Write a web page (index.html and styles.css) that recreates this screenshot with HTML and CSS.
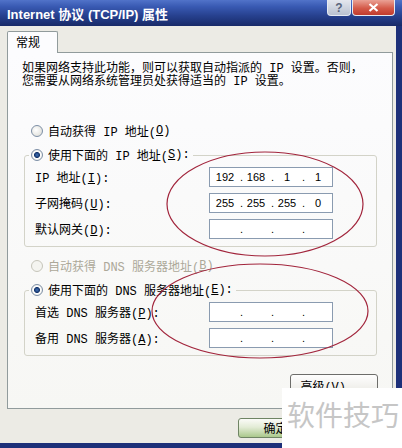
FILE: index.html
```html
<!DOCTYPE html>
<html lang="zh-CN">
<head>
  <meta charset="UTF-8" />
  <title>Internet 协议 (TCP/IP) 属性</title>
  <link rel="stylesheet" href="styles.css">
</head>
<body>
  <div class="window">
    <div class="titlebar">
      <span class="title">Internet 协议 (TCP/IP) 属性</span>
      <div class="caption-btns">
        <span class="cap-btn help">?</span>
        <span class="cap-btn close">
          <svg width="11" height="9" viewBox="0 0 11 9"><path d="M1.5 1 L9.5 8 M9.5 1 L1.5 8" stroke="#fff" stroke-width="2.2" fill="none"/></svg>
        </span>
      </div>
    </div>

    <div class="client">
      <div class="tabs"><span class="tab">常规</span></div>
      <div class="panel">
        <p class="intro">如果网络支持此功能，则可以获取自动指派的 IP 设置。否则，<br>您需要从网络系统管理员处获得适当的 IP 设置。</p>

        <div class="radio-row first"><span class="radio"></span>自动获得 IP 地址(<u>O</u>)</div>
        <fieldset class="group">
          <legend class="radio-row"><span class="radio checked"></span>使用下面的 IP 地址(<u>S</u>):</legend>
          <div class="field-row">
            <span>IP 地址(<u>I</u>):</span>
            <div class="ip"><span class="oct">192</span><span class="dot">.</span><span class="oct">168</span><span class="dot">.</span><span class="oct">1</span><span class="dot">.</span><span class="oct">1</span></div>
          </div>
          <div class="field-row">
            <span>子网掩码(<u>U</u>):</span>
            <div class="ip"><span class="oct">255</span><span class="dot">.</span><span class="oct">255</span><span class="dot">.</span><span class="oct">255</span><span class="dot">.</span><span class="oct">0</span></div>
          </div>
          <div class="field-row">
            <span>默认网关(<u>D</u>):</span>
            <div class="ip"><span class="oct"></span><span class="dot">.</span><span class="oct"></span><span class="dot">.</span><span class="oct"></span><span class="dot">.</span><span class="oct"></span></div>
          </div>
        </fieldset>

        <div class="radio-row disabled"><span class="radio"></span>自动获得 DNS 服务器地址(<u>B</u>)</div>
        <fieldset class="group">
          <legend class="radio-row"><span class="radio checked"></span>使用下面的 DNS 服务器地址(<u>E</u>):</legend>
          <div class="field-row">
            <span>首选 DNS 服务器(<u>P</u>):</span>
            <div class="ip"><span class="oct"></span><span class="dot">.</span><span class="oct"></span><span class="dot">.</span><span class="oct"></span><span class="dot">.</span><span class="oct"></span></div>
          </div>
          <div class="field-row">
            <span>备用 DNS 服务器(<u>A</u>):</span>
            <div class="ip"><span class="oct"></span><span class="dot">.</span><span class="oct"></span><span class="dot">.</span><span class="oct"></span><span class="dot">.</span><span class="oct"></span></div>
          </div>
        </fieldset>

        <div class="panel-actions"><button class="btn advanced">高级(<u>V</u>)...</button></div>
      </div>
      <div class="dialog-actions"><button class="btn default">确定</button></div>
    </div>

    <!-- red marks drawn over the screenshot -->
    <svg class="marks" width="402" height="448" viewBox="0 0 402 448">
      <ellipse cx="265" cy="204" rx="98" ry="52" />
      <ellipse cx="260" cy="311" rx="108" ry="47" />
    </svg>
    <div class="watermark">软件技巧</div>
  </div>
</body>
</html>
```

FILE: styles.css
```css
body {
  margin: 0;
  font: 12px "Liberation Mono", "Noto Sans CJK SC", monospace;
  color: #000;
  background: #ecebe5;
}
.window {
  width: 402px;
  height: 448px;
  position: relative;
  overflow: hidden;
  display: flex;
  flex-direction: column;
}
.titlebar {
  height: 26px;
  flex: none;
  display: flex;
  background: linear-gradient(#5173c9 0%, #395ab3 25%, #27418f 60%, #182a68 100%);
}
.title {
  padding: 7px 0 0 7px;
  color: #fff;
  font: bold 13px/15px "Liberation Sans", "Noto Sans CJK SC", sans-serif;
}
.caption-btns {
  margin-left: auto;
  margin-right: 7px;
  display: flex;
  gap: 1px;
}
.cap-btn {
  height: 16px;
  box-sizing: border-box;
  border: 1px solid #e6eaf2;
  border-top: none;
  border-radius: 0 0 4px 4px;
  display: flex;
  align-items: center;
  justify-content: center;
}
.help {
  width: 24px;
  background: linear-gradient(#e4e7ee, #b9c1d0);
  color: #59647c;
  font: bold 12px "Liberation Sans", sans-serif;
}
.close {
  width: 43px;
  background: linear-gradient(#eaa195, #d45a49 55%, #c13b2d);
}
.client {
  flex: 1;
  border-right: 6px solid #1d3079;
  border-bottom: 5px solid #1d3079;
  padding: 5px 3px 0 7px;
}
.tabs {
  height: 21px;
  display: flex;
}
.tab {
  position: relative;
  z-index: 1;
  width: 51px;
  height: 22px;
  box-sizing: border-box;
  border: 1px solid #919b9c;
  border-bottom: none;
  border-radius: 2px 2px 0 0;
  padding-left: 8px;
  line-height: 20px;
  background: #fcfcfe;
  font-family: "Noto Sans CJK SC", sans-serif;
}
.panel {
  height: 357px;
  box-sizing: border-box;
  border: 1px solid #919b9c;
  background: linear-gradient(#fcfcfe, #f7f7f4);
}
.intro {
  margin: 10px 0 0 14px;
  line-height: 13px;
  white-space: nowrap;
}
.radio-row {
  display: flex;
  align-items: center;
  height: 16px;
  margin-left: 23px;
  white-space: nowrap;
}
.radio-row.first {
  margin-top: 34px;
}
.radio-row.disabled {
  margin-top: 11px;
  color: #aca899;
}
.radio {
  flex: none;
  width: 12px;
  height: 12px;
  box-sizing: border-box;
  margin-right: 5px;
  border: 1px solid #7d8fa6;
  border-radius: 50%;
  background: radial-gradient(circle at 40% 40%, #ffffff, #d9d9d2);
}
.radio.checked {
  background: radial-gradient(circle, #3f72b8 0, #17366c 2.6px, #ffffff 3.4px, #d9d9d2 100%);
}
.disabled .radio {
  border-color: #c6c5ba;
  background: #f4f4f0;
}
.group {
  margin: 8px 15px 0 16px;
  padding: 4px 0 7px;
  min-width: 0;
  border: 1px solid #d3d3c8;
  border-radius: 3px;
}
.group legend.radio-row {
  margin-left: 4px;
  padding: 0 3px 0 2px;
}
.field-row {
  display: grid;
  grid-template-columns: 174px 124px;
  align-items: center;
  height: 20px;
  padding-left: 10px;
  white-space: nowrap;
}
.field-row + .field-row {
  margin-top: 6px;
}
.ip {
  height: 20px;
  box-sizing: border-box;
  display: flex;
  align-items: center;
  padding-left: 2px;
  border: 1px solid #8a9bb0;
  background: #fff;
  font: 11px "Liberation Sans", sans-serif;
}
.oct {
  width: 26px;
  text-align: center;
}
.dot {
  width: 5px;
  text-align: right;
}
.panel-actions {
  display: flex;
  justify-content: flex-end;
  margin: 18px 14px 0 0;
}
.btn {
  font: 12px "Liberation Mono", "Noto Sans CJK SC", monospace;
  color: #000;
  height: 23px;
  padding: 0;
  border: 1px solid #6d6d6a;
  border-radius: 3px;
  background: linear-gradient(#fefefe, #ecebe6 80%, #d7d3ca);
}
.advanced {
  width: 88px;
}
.dialog-actions {
  display: flex;
  padding: 9px 0 0 231px;
}
.default {
  width: 75px;
  height: 20px;
  border-color: #6f8464;
  background: linear-gradient(#fbfbf8, #e3ecd6 45%, #aac88c);
}
.marks {
  position: absolute;
  left: 0;
  top: 0;
  pointer-events: none;
}
.marks ellipse {
  fill: none;
  stroke: #a2253c;
  stroke-width: 1.2;
}
.watermark {
  position: absolute;
  left: 282px;
  top: 388px;
  right: 0;
  bottom: 0;
  padding-left: 5px;
  background: #fff;
  color: #c6c6c6;
  font: 28px/52px "Noto Sans CJK SC", sans-serif;
  white-space: nowrap;
}
```
